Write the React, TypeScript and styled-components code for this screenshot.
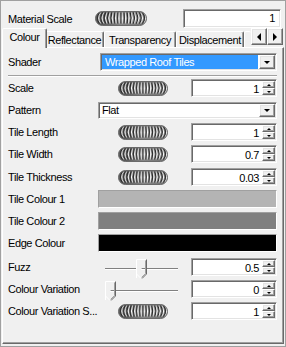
import React from 'react'
import styled, { createGlobalStyle, css } from 'styled-components'

const GlobalStyle = createGlobalStyle`
  html, body {
    margin: 0;
    padding: 0;
    background: #f0f0f0;
  }
  body {
    font-family: "Liberation Sans", Arial, sans-serif;
    font-size: 11px;
    letter-spacing: -0.4px;
    color: #000;
  }
  * {
    box-sizing: border-box;
  }
`

const raised = css`
  border: 1px solid;
  border-color: #ffffff #696969 #696969 #ffffff;
  box-shadow: inset -1px -1px 0 #a0a0a0, inset 1px 1px 0 #e3e3e3;
  background: #f0f0f0;
`

const sunken = css`
  border: 1px solid;
  border-color: #a0a0a0 #ffffff #ffffff #a0a0a0;
  box-shadow: inset 1px 1px 0 #696969, inset -1px -1px 0 #e3e3e3;
`

const Frame = styled.div`
  width: 286px;
  height: 347px;
  border: 1px solid #a0a0a0;
  background: #f0f0f0;
  display: flex;
  flex-direction: column;
`

const TopRow = styled.div`
  display: flex;
  align-items: center;
  height: 19px;
  margin-top: 8px;
  padding-left: 7px;
`

const TopLabel = styled.div`
  width: 87px;
`

const TextBox = styled.div`
  ${sunken}
  width: 98px;
  height: 19px;
  margin-left: 36px;
  background: #fff;
  text-align: right;
  padding-right: 5px;
  line-height: 17px;
`

const TabStrip = styled.div`
  display: flex;
  align-items: flex-end;
  height: 19px;
  padding-left: 3px;
  position: relative;
  z-index: 1;
`

const Tab = styled.div<{ $active?: boolean; $w: number }>`
  flex-shrink: 0;
  width: ${(p) => p.$w}px;
  height: ${(p) => (p.$active ? 20 : 16)}px;
  margin: 0 ${(p) => (p.$active ? -2 : 0)}px ${(p) => (p.$active ? -1 : 0)}px;
  border: 1px solid;
  border-bottom: none;
  border-color: #ffffff #696969 transparent #ffffff;
  border-radius: 2px 2px 0 0;
  box-shadow: inset -1px 0 0 #a0a0a0;
  background: #f0f0f0;
  position: relative;
  z-index: ${(p) => (p.$active ? 2 : 1)};
  display: flex;
  align-items: center;
  justify-content: center;
  padding-bottom: ${(p) => (p.$active ? 3 : 0)}px;
  white-space: nowrap;
`

const PartialTab = styled(Tab)`
  border-right: none;
  box-shadow: none;
`

const ScrollButton = styled.div`
  ${raised}
  align-self: flex-start;
  width: 16px;
  height: 17px;
  display: flex;
  align-items: center;
  justify-content: center;
  flex-shrink: 0;
`

const Triangle = styled.span<{ $dir: 'up' | 'down' | 'left' | 'right'; $size: number }>`
  width: 0;
  height: 0;
  border-style: solid;
  ${({ $dir, $size }) => {
    const s = $size
    if ($dir === 'up') return `border-width: 0 ${s}px ${s}px ${s}px; border-color: transparent transparent #000 transparent;`
    if ($dir === 'down') return `border-width: ${s}px ${s}px 0 ${s}px; border-color: #000 transparent transparent transparent;`
    if ($dir === 'left') return `border-width: ${s}px ${s}px ${s}px 0; border-color: transparent #000 transparent transparent;`
    return `border-width: ${s}px 0 ${s}px ${s}px; border-color: transparent transparent transparent #000;`
  }}
`

const Panel = styled.div`
  flex: 1;
  margin: 0 1px 2px 1px;
  border: 1px solid;
  border-color: #ffffff #696969 #696969 #ffffff;
  box-shadow: inset -1px -1px 0 #a0a0a0;
  padding: 3px 6px 0 5px;
  display: flex;
  flex-direction: column;
`

const Row = styled.div<{ $gap?: number }>`
  display: flex;
  align-items: center;
  height: 22px;
  margin-top: ${(p) => p.$gap ?? 0}px;
`

const Label = styled.div`
  width: 90px;
  flex-shrink: 0;
  white-space: nowrap;
`

const Separator = styled.div`
  height: 2px;
  margin-top: 2px;
  border-top: 1px solid #a0a0a0;
  border-bottom: 1px solid #ffffff;
`

const Select = styled.div<{ $inset?: number; $h: number }>`
  ${sunken}
  flex: 1;
  height: ${(p) => p.$h}px;
  margin-left: ${(p) => p.$inset ?? 0}px;
  background: #fff;
  display: flex;
  padding: 1px;
`

const SelectText = styled.div<{ $selected?: boolean }>`
  flex: 1;
  padding-left: ${(p) => (p.$selected ? 3 : 2)}px;
  margin-right: 1px;
  display: flex;
  align-items: center;
  background: ${(p) => (p.$selected ? '#3399ff' : 'transparent')};
  color: ${(p) => (p.$selected ? '#fff' : '#000')};
`

const SelectButton = styled.div`
  ${raised}
  width: 16px;
  display: flex;
  align-items: center;
  justify-content: center;
`

const SpinBox = styled.div`
  ${sunken}
  width: 86px;
  height: 18px;
  margin-left: auto;
  background: #fff;
  display: flex;
  padding: 1px 1px 1px 2px;
`

const SpinValue = styled.div`
  flex: 1;
  text-align: right;
  padding-right: 3px;
  line-height: 16px;
`

const SpinButtons = styled.div`
  width: 13px;
  display: flex;
  flex-direction: column;
`

const SpinButton = styled.div`
  ${raised}
  flex: 1;
  display: flex;
  align-items: center;
  justify-content: center;
`

const Swatch = styled.div<{ $color: string }>`
  flex: 1;
  height: 18px;
  border: 1px solid;
  border-color: #a0a0a0 #ffffff #ffffff #a0a0a0;
  background: ${(p) => p.$color};
`

const JogWrap = styled.div<{ $offset: number }>`
  display: flex;
  margin-left: ${(p) => p.$offset}px;
`

const SliderBox = styled.div`
  position: relative;
  width: 73px;
  height: 22px;
  margin-left: 7px;
`

const SliderTrack = styled.div`
  position: absolute;
  left: 0;
  right: 0;
  top: 12px;
  height: 2px;
  border-top: 1px solid #808080;
  border-bottom: 1px solid #ffffff;
`

const SliderThumb = styled.svg`
  position: absolute;
  top: 3px;
`

const Jog: React.FC<{ w: number }> = ({ w }) => {
  const h = 14
  const n = 15
  const ridges = []
  for (let i = 0; i < n; i++) {
    const x = 4.5 + i * ((w - 9) / (n - 1))
    const t = (x - w / 2) / (w / 2)
    const c = x + t * 5
    ridges.push(
      <g key={i}>
        <path d={`M${x} 1.5 Q${c} ${h / 2} ${x} ${h - 1.5}`} stroke="#303030" strokeWidth={1.1} fill="none" />
        <path d={`M${x + 1.3} 1.5 Q${c + 1.3} ${h / 2} ${x + 1.3} ${h - 1.5}`} stroke="#ffffff" strokeWidth={1} fill="none" />
      </g>
    )
  }
  return (
    <svg width={w} height={h + 1} viewBox={`0 0 ${w} ${h + 1}`}>
      <defs>
        <linearGradient id={`jog${w}`} x1="0" x2="1" y1="0" y2="0">
          <stop offset="0" stopColor="#5a5a5a" />
          <stop offset="0.5" stopColor="#a8a8a8" />
          <stop offset="1" stopColor="#8a8a8a" />
        </linearGradient>
        <linearGradient id={`jogv${w}`} x1="0" x2="0" y1="0" y2="1">
          <stop offset="0" stopColor="#000" stopOpacity="0.25" />
          <stop offset="0.5" stopColor="#000" stopOpacity="0" />
          <stop offset="1" stopColor="#000" stopOpacity="0.25" />
        </linearGradient>
        <clipPath id={`jogclip${w}`}>
          <rect x={0.5} y={0.5} width={w - 1} height={h} rx={h / 2} />
        </clipPath>
      </defs>
      <rect x={0.5} y={0.5} width={w - 1} height={h} rx={h / 2} fill={`url(#jog${w})`} />
      <g clipPath={`url(#jogclip${w})`}>
        {ridges}
        <rect x={0} y={0} width={w} height={h + 1} fill={`url(#jogv${w})`} />
      </g>
      <rect x={0.5} y={0.5} width={w - 1} height={h} rx={h / 2} fill="none" stroke="#6a6a6a" />
    </svg>
  )
}

const Spinner: React.FC<{ value: string }> = ({ value }) => (
  <SpinBox>
    <SpinValue>{value}</SpinValue>
    <SpinButtons>
      <SpinButton>
        <Triangle $dir="up" $size={2} />
      </SpinButton>
      <SpinButton>
        <Triangle $dir="down" $size={2} />
      </SpinButton>
    </SpinButtons>
  </SpinBox>
)

const Slider: React.FC<{ pos: number }> = ({ pos }) => (
  <SliderBox>
    <SliderTrack />
    <SliderThumb width={11} height={20} viewBox="0 0 11 20" style={{ left: Math.round(pos * 62) }}>
      <path d="M0.5 19 V0.5 H10.5" stroke="#ffffff" fill="#f0f0f0" />
      <path d="M10.5 0.5 V15 L6 19.5" stroke="#696969" fill="none" />
      <path d="M9.5 1.5 V14.6 L5.6 18.4" stroke="#a0a0a0" fill="none" />
      <path d="M0.5 15 L5 19.5" stroke="#ffffff" fill="none" />
    </SliderThumb>
  </SliderBox>
)

const JogRow: React.FC<{ label: string; value: string; gap?: number }> = ({ label, value, gap }) => (
  <Row $gap={gap}>
    <Label>{label}</Label>
    <JogWrap $offset={20}>
      <Jog w={50} />
    </JogWrap>
    <Spinner value={value} />
  </Row>
)

const App: React.FC = () => {
  return (
    <>
      <GlobalStyle />
      <Frame>
        <TopRow>
          <TopLabel>Material Scale</TopLabel>
          <Jog w={52} />
          <TextBox>1</TextBox>
        </TopRow>
        <TabStrip>
          <Tab $active $w={45}>Colour</Tab>
          <Tab $w={59}>Reflectance</Tab>
          <Tab $w={72}>Transparency</Tab>
          <Tab $w={68}>Displacement</Tab>
          <PartialTab $w={7} />
          <ScrollButton>
            <Triangle $dir="left" $size={4} />
          </ScrollButton>
          <ScrollButton>
            <Triangle $dir="right" $size={4} />
          </ScrollButton>
        </TabStrip>
        <Panel>
          <Row>
            <Label>Shader</Label>
            <Select $inset={2} $h={18}>
              <SelectText $selected>Wrapped Roof Tiles</SelectText>
              <SelectButton>
                <Triangle $dir="down" $size={3.5} />
              </SelectButton>
            </Select>
          </Row>
          <Separator />
          <JogRow label="Scale" value="1" />
          <Row>
            <Label>Pattern</Label>
            <Select $h={17}>
              <SelectText>Flat</SelectText>
              <SelectButton>
                <Triangle $dir="down" $size={3.5} />
              </SelectButton>
            </Select>
          </Row>
          <JogRow label="Tile Length" value="1" />
          <JogRow label="Tile Width" value="0.7" />
          <JogRow label="Tile Thickness" value="0.03" gap={1} />
          <Row>
            <Label>Tile Colour 1</Label>
            <Swatch $color="#b4b4b4" />
          </Row>
          <Row>
            <Label>Tile Colour 2</Label>
            <Swatch $color="#808080" />
          </Row>
          <Row>
            <Label>Edge Colour</Label>
            <Swatch $color="#000000" />
          </Row>
          <Row $gap={2}>
            <Label>Fuzz</Label>
            <Slider pos={0.5} />
            <Spinner value="0.5" />
          </Row>
          <Row>
            <Label>Colour Variation</Label>
            <Slider pos={0} />
            <Spinner value="0" />
          </Row>
          <JogRow label="Colour Variation S..." value="1" />
        </Panel>
      </Frame>
    </>
  )
}

export default App
